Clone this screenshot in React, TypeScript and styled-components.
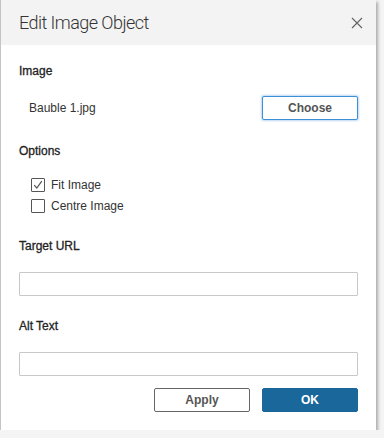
import React from 'react';
import styled, {createGlobalStyle} from 'styled-components';

const GlobalStyle = createGlobalStyle`
  html, body {
    margin: 0;
    padding: 0;
    background: #f4f4f4;
  }
  body {
    font-family: 'Liberation Sans', Arial, sans-serif;
    color: #333;
  }
`;

const Dialog = styled.div`
  box-sizing: border-box;
  width: 376px;
  height: 430px;
  background: #fff;
  border-left: 1px solid #c4c4c4;
  box-shadow: 2px 2px 3px rgba(0, 0, 0, 0.3);
  display: flex;
  flex-direction: column;
`;

const Header = styled.div`
  height: 45px;
  flex: none;
  background: #f3f3f3;
  display: flex;
  align-items: center;
  justify-content: space-between;
  padding: 0 13px 0 18px;
`;

const Title = styled.h1`
  margin: 0;
  font-family: Roboto, Lato, sans-serif;
  font-weight: 300;
  font-size: 18px;
  letter-spacing: -0.55px;
  color: #333;
`;

const CloseButton = styled.button`
  border: 0;
  padding: 0;
  background: none;
  width: 12px;
  height: 12px;
  display: flex;
  cursor: pointer;
`;

const Body = styled.div`
  flex: 1;
  padding: 0 18px;
  display: flex;
  flex-direction: column;
`;

const Label = styled.div<{$top: number}>`
  margin-top: ${p => p.$top}px;
  font-size: 12px;
  line-height: 14px;
  color: #222;
  -webkit-text-stroke: 0.3px #222;
`;

const FileRow = styled.div`
  margin-top: 18px;
  display: flex;
  align-items: center;
  justify-content: space-between;
  padding-left: 10px;
  font-size: 12px;
  color: #333;
`;

const Button = styled.button<{$variant: 'focus' | 'plain' | 'primary'}>`
  box-sizing: border-box;
  width: 96px;
  height: 24px;
  border-radius: 2px;
  font-family: 'Liberation Sans', Arial, sans-serif;
  font-size: 12px;
  font-weight: 700;
  cursor: pointer;
  border: 1px solid
    ${p =>
      p.$variant === 'focus'
        ? '#3d8fd6'
        : p.$variant === 'primary'
          ? '#1a679c'
          : '#666'};
  background: ${p => (p.$variant === 'primary' ? '#1a679c' : '#fff')};
  color: ${p => (p.$variant === 'primary' ? '#fff' : '#555')};
  box-shadow: ${p =>
    p.$variant === 'focus' ? '0 0 2px 1px rgba(61, 143, 214, 0.35)' : 'none'};
`;

const Options = styled.div`
  margin-top: 20px;
  padding-left: 12px;
  display: flex;
  flex-direction: column;
  gap: 7px;
`;

const CheckRow = styled.label`
  display: flex;
  align-items: center;
  gap: 6px;
  font-size: 12px;
  color: #333;
  height: 14px;
`;

const Box = styled.span`
  box-sizing: border-box;
  width: 14px;
  height: 14px;
  border: 1px solid #555;
  border-radius: 1px;
  display: flex;
  align-items: center;
  justify-content: center;
  background: #fff;
`;

const TextInput = styled.input`
  box-sizing: border-box;
  margin-top: 19px;
  width: 100%;
  height: 24px;
  border: 1px solid #c8c8c8;
  border-radius: 1px;
  padding: 0 6px;
  font-family: 'Liberation Sans', Arial, sans-serif;
  font-size: 12px;
  outline: none;
`;

const Footer = styled.div`
  margin-top: 12px;
  display: flex;
  justify-content: flex-end;
  gap: 12px;
`;

const Check: React.FC<{checked?: boolean; label: string}> = ({checked, label}) => (
  <CheckRow>
    <Box>
      {checked && (
        <svg width="10" height="10" viewBox="0 0 10 10">
          <path d="M1.2 5.2 L3.8 8 L8.8 1.2" fill="none" stroke="#555" strokeWidth="1.2" />
        </svg>
      )}
    </Box>
    {label}
  </CheckRow>
);

export default function App() {
  return (
    <>
      <GlobalStyle />
      <Dialog>
        <Header>
          <Title>Edit Image Object</Title>
          <CloseButton aria-label="Close">
            <svg width="12" height="12" viewBox="0 0 12 12">
              <path d="M1 1 L11 11 M11 1 L1 11" stroke="#666" strokeWidth="1.2" />
            </svg>
          </CloseButton>
        </Header>
        <Body>
          <Label $top={19}>Image</Label>
          <FileRow>
            <span>Bauble 1.jpg</span>
            <Button $variant="focus">Choose</Button>
          </FileRow>
          <Label $top={24}>Options</Label>
          <Options>
            <Check checked label="Fit Image" />
            <Check label="Centre Image" />
          </Options>
          <Label $top={26}>Target URL</Label>
          <TextInput />
          <Label $top={23}>Alt Text</Label>
          <TextInput />
          <Footer>
            <Button $variant="plain">Apply</Button>
            <Button $variant="primary">OK</Button>
          </Footer>
        </Body>
      </Dialog>
    </>
  );
}
